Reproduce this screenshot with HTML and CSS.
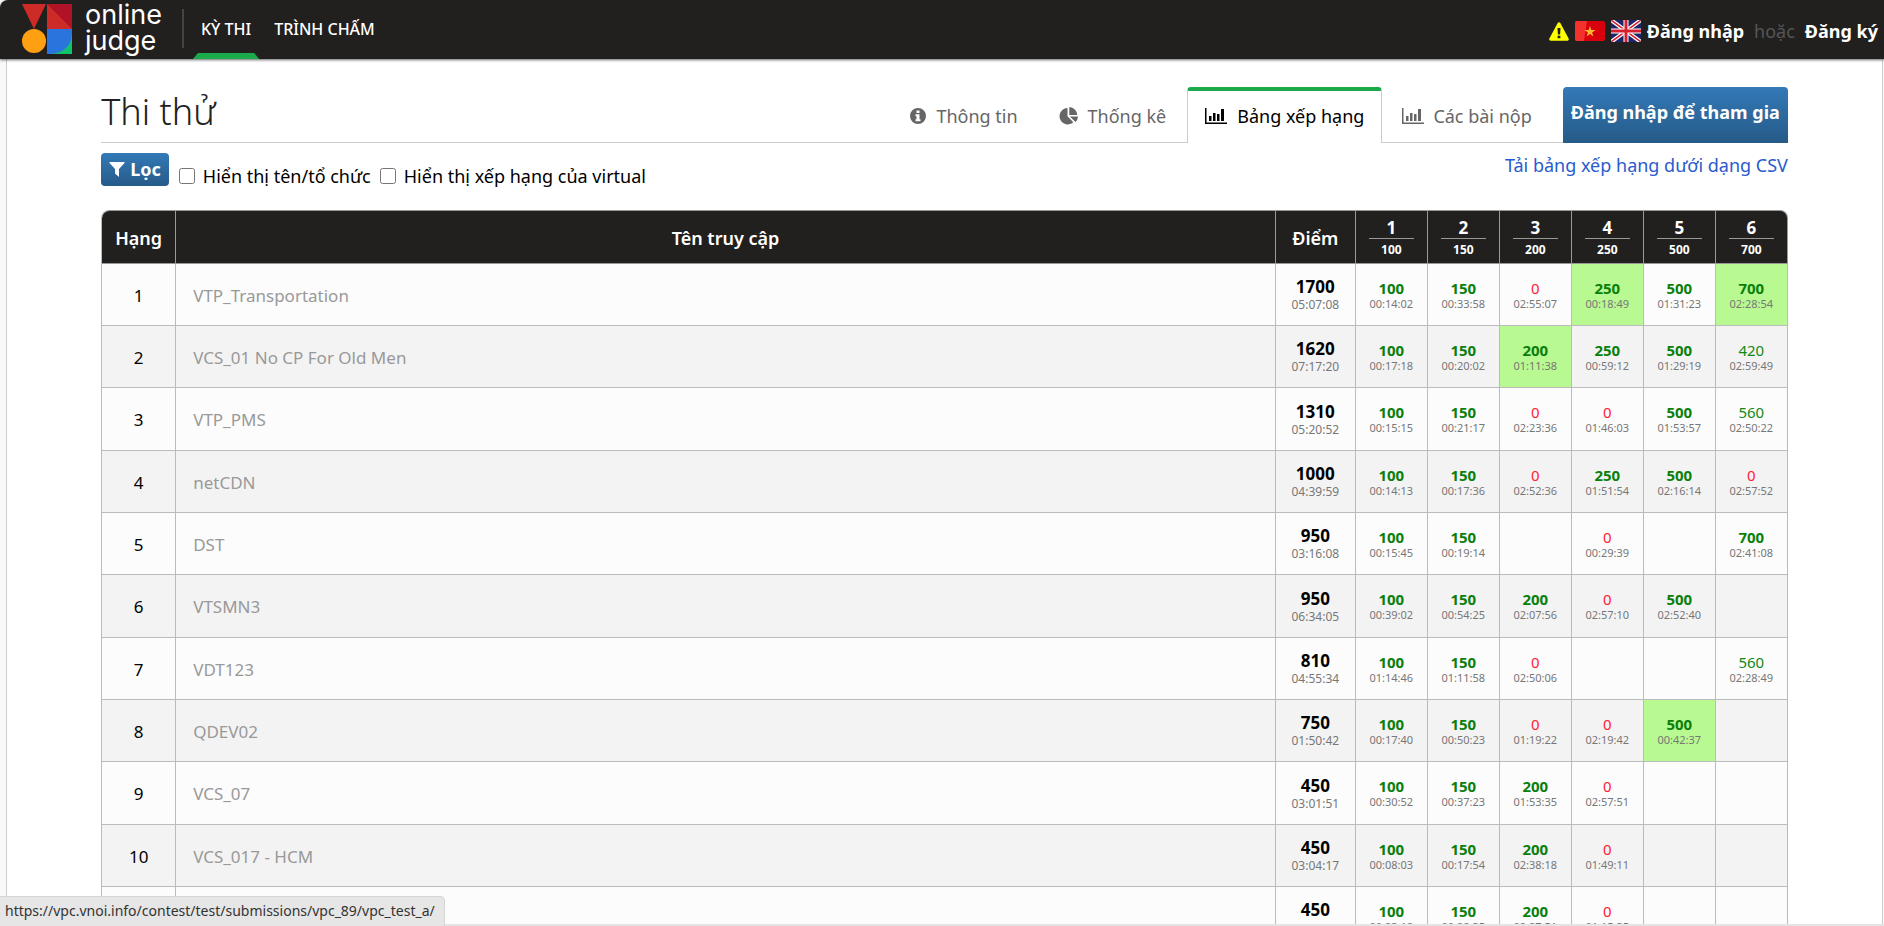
FILE: index.html
```html
<!DOCTYPE html>
<html lang="vi">
<head>
<meta charset="utf-8">
<title>Thi thử</title>
<link rel="stylesheet" href="styles.css">
</head>
<body>
<header class="nav">
  <a class="logo" href="#">
    <svg width="50" height="50" viewBox="0 0 50 50" aria-hidden="true">
      <path fill="#cd2b27" d="M0 0h24L12 25z"/><path fill="#cd2b27" d="M25 0h25v25H25z"/><path fill="#b01226" d="M25 0h25v25z"/>
      <circle cx="12" cy="37" r="12" fill="#ffa012"/><path fill="#2a74de" d="M25 25h25v25H25z"/><path fill="#11c26b" d="M50 29v21H29C42 49 50 41 50 29z"/>
    </svg>
    <span class="logo-text">online<br>judge</span>
  </a>
  <span class="nav-sep"></span>
  <nav class="nav-list">
    <a class="nav-item current" href="#">KỲ THI</a>
    <a class="nav-item" href="#">TRÌNH CHẤM</a>
  </nav>
  <div class="user">
    <svg width="20" height="19" viewBox="0 0 20 19" role="img" aria-label="Cảnh báo"><path fill="#ff0" d="M8.700 1a1.500 1.500 0 0 1 2.600 0l8.300 15.500a1.500 1.500 0 0 1-1.300 2.200H1.700a1.500 1.500 0 0 1-1.300-2.200z"/><path fill="#222" d="M8.500 6h3l-.4 6.500H8.900zM8.600 13.700h2.800v2.500H8.600z"/></svg>
    <svg class="flag" width="30" height="20" viewBox="0 0 30 20" role="img" aria-label="Tiếng Việt"><path fill="#d8000d" d="M0 0h30v20H0z"/><path fill="#f3322e" d="M0 0h12L9 20H0z"/><path fill="#fdb92a" d="M15 5l1.300 4h4.200l-3.400 2.400 1.300 4-3.400-2.500-3.400 2.500 1.300-4L9.500 9h4.200z"/></svg>
    <svg class="flag" width="30" height="22" viewBox="0 0 30 22" role="img" aria-label="English"><path fill="#1d2569" d="M0 0h30v22H0z"/><path stroke="#fff" stroke-width="4" d="M0 0l30 22M30 0L0 22"/><path stroke="#d6202f" stroke-width="1.500" d="M0 0l30 22M30 0L0 22"/><path stroke="#fff" stroke-width="5" d="M15 0v22M0 11h30"/><path stroke="#d6202f" stroke-width="3" d="M15 0v22M0 11h30"/></svg>
    <a class="auth" href="#">Đăng nhập</a><span class="or">hoặc</span><a class="auth" href="#">Đăng ký</a>
  </div>
</header>
<main class="page">
  <div class="heading">
    <h1>Thi thử</h1>
    <nav class="tabs">
      <a class="tab" href="#"><svg width="18" height="18" viewBox="0 0 18 18" aria-hidden="true"><path fill="currentColor" fill-rule="evenodd" d="M9 1a8 8 0 1 0 0 16A8 8 0 0 0 9 1zM7.500 3.500h3V6h-3zM6.500 7.300h4v5h1v1.900h-5v-1.900h1V9.200h-1z"/></svg>Thông tin</a>
      <a class="tab" href="#"><svg width="20" height="18" viewBox="0 0 20 18" aria-hidden="true"><path fill="currentColor" d="M8.500 1v8.300l5.800 5.900A8.200 8.200 0 1 1 8.500 1zM10.300 0a8.300 8.300 0 0 1 8 8h-8zM10.800 9.500h8.200a8 8 0 0 1-2.500 5.500z"/></svg>Thống kê</a>
      <a class="tab active" href="#"><svg width="22" height="18" viewBox="0 0 22 18" aria-hidden="true"><path fill="currentColor" d="M0 1h1.500v14.500H22V17H0zM4 9h2.500v5H4zM8 6h2.500v8H8zM12 7h2.500v7H12zM16 2h3v12h-3z"/></svg>Bảng xếp hạng</a>
      <a class="tab" href="#"><svg width="22" height="18" viewBox="0 0 22 18" aria-hidden="true"><path fill="currentColor" d="M0 1h1.500v14.500H22V17H0zM4 9h2.500v5H4zM8 6h2.500v8H8zM12 7h2.500v7H12zM16 2h3v12h-3z"/></svg>Các bài nộp</a>
      <a class="join" href="#">Đăng nhập để tham gia</a>
    </nav>
  </div>
  <div class="tools">
    <button class="filter" type="button"><svg width="16" height="16" viewBox="0 0 15 16" aria-hidden="true"><path fill="currentColor" d="M0 1h15v1L9.500 8v8L5.500 12.500V8L0 2z"/></svg>Lọc</button>
    <label class="check"><input type="checkbox">Hiển thị tên/tổ chức</label>
    <label class="check"><input type="checkbox">Hiển thị xếp hạng của virtual</label>
    <a class="csv" href="#">Tải bảng xếp hạng dưới dạng CSV</a>
  </div>
  <table class="ranking">
    <colgroup><col class="c-rank"><col><col class="c-total"><col class="c-prob" span="6"></colgroup>
    <thead>
      <tr><th>Hạng</th><th>Tên truy cập</th><th>Điểm</th>
      <th class="prob">1<small>100</small></th><th class="prob">2<small>150</small></th><th class="prob">3<small>200</small></th><th class="prob">4<small>250</small></th><th class="prob">5<small>500</small></th><th class="prob">6<small>700</small></th></tr>
    </thead>
    <tbody>
      <tr><td>1</td><td class="name">VTP_Transportation</td><td class="total">1700<small>05:07:08</small></td><td class="full">100<small>00:14:02</small></td><td class="full">150<small>00:33:58</small></td><td class="zero">0<small>02:55:07</small></td><td class="full first">250<small>00:18:49</small></td><td class="full">500<small>01:31:23</small></td><td class="full first">700<small>02:28:54</small></td></tr>
      <tr><td>2</td><td class="name">VCS_01 No CP For Old Men</td><td class="total">1620<small>07:17:20</small></td><td class="full">100<small>00:17:18</small></td><td class="full">150<small>00:20:02</small></td><td class="full first">200<small>01:11:38</small></td><td class="full">250<small>00:59:12</small></td><td class="full">500<small>01:29:19</small></td><td class="part">420<small>02:59:49</small></td></tr>
      <tr><td>3</td><td class="name">VTP_PMS</td><td class="total">1310<small>05:20:52</small></td><td class="full">100<small>00:15:15</small></td><td class="full">150<small>00:21:17</small></td><td class="zero">0<small>02:23:36</small></td><td class="zero">0<small>01:46:03</small></td><td class="full">500<small>01:53:57</small></td><td class="part">560<small>02:50:22</small></td></tr>
      <tr><td>4</td><td class="name">netCDN</td><td class="total">1000<small>04:39:59</small></td><td class="full">100<small>00:14:13</small></td><td class="full">150<small>00:17:36</small></td><td class="zero">0<small>02:52:36</small></td><td class="full">250<small>01:51:54</small></td><td class="full">500<small>02:16:14</small></td><td class="zero">0<small>02:57:52</small></td></tr>
      <tr><td>5</td><td class="name">DST</td><td class="total">950<small>03:16:08</small></td><td class="full">100<small>00:15:45</small></td><td class="full">150<small>00:19:14</small></td><td></td><td class="zero">0<small>00:29:39</small></td><td></td><td class="full">700<small>02:41:08</small></td></tr>
      <tr><td>6</td><td class="name">VTSMN3</td><td class="total">950<small>06:34:05</small></td><td class="full">100<small>00:39:02</small></td><td class="full">150<small>00:54:25</small></td><td class="full">200<small>02:07:56</small></td><td class="zero">0<small>02:57:10</small></td><td class="full">500<small>02:52:40</small></td><td></td></tr>
      <tr><td>7</td><td class="name">VDT123</td><td class="total">810<small>04:55:34</small></td><td class="full">100<small>01:14:46</small></td><td class="full">150<small>01:11:58</small></td><td class="zero">0<small>02:50:06</small></td><td></td><td></td><td class="part">560<small>02:28:49</small></td></tr>
      <tr><td>8</td><td class="name">QDEV02</td><td class="total">750<small>01:50:42</small></td><td class="full">100<small>00:17:40</small></td><td class="full">150<small>00:50:23</small></td><td class="zero">0<small>01:19:22</small></td><td class="zero">0<small>02:19:42</small></td><td class="full first">500<small>00:42:37</small></td><td></td></tr>
      <tr><td>9</td><td class="name">VCS_07</td><td class="total">450<small>03:01:51</small></td><td class="full">100<small>00:30:52</small></td><td class="full">150<small>00:37:23</small></td><td class="full">200<small>01:53:35</small></td><td class="zero">0<small>02:57:51</small></td><td></td><td></td></tr>
      <tr><td>10</td><td class="name">VCS_017 - HCM</td><td class="total">450<small>03:04:17</small></td><td class="full">100<small>00:08:03</small></td><td class="full">150<small>00:17:54</small></td><td class="full">200<small>02:38:18</small></td><td class="zero">0<small>01:49:11</small></td><td></td><td></td></tr>
      <tr><td></td><td class="name"></td><td class="total">450<small>&nbsp;</small></td><td class="full">100<small>00:23:18</small></td><td class="full">150<small>00:28:35</small></td><td class="full">200<small>02:27:51</small></td><td class="zero">0<small>01:15:35</small></td><td></td><td></td></tr>
    </tbody>
  </table>
</main>
<div class="status">https://vpc.vnoi.info/contest/test/submissions/vpc_89/vpc_test_a/</div>
</body>
</html>
```
FILE: styles.css
```css
* { box-sizing: border-box; }
html, body { height: 100%; }
html { background: #fff; }
body {
  margin: 0;
  overflow: hidden;
  display: flex;
  flex-direction: column;
  background: #f9f9f9;
  border-bottom: 2px solid #e4e4e4;
  font: 18px/24px "Noto Sans", sans-serif;
  color: #000;
}
a { text-decoration: none; color: inherit; }
svg { flex: none; }

.nav {
  flex: none;
  display: flex;
  height: 59px;
  padding: 0 6px 0 22px;
  background: #22201f;
  border-top-left-radius: 8px;
  box-shadow: 0 1px 3px #0009;
  z-index: 1;
}
.logo { display: flex; align-items: center; gap: 13px; padding-bottom: 2px; color: #fff; }
.logo-text { font: 27px/26px Inter, sans-serif; padding-bottom: 2px; }
.nav-sep { width: 2px; margin: 9px 9px 11px 20px; background: #444; }
.nav-list { display: flex; }
.nav-item {
  position: relative;
  display: flex;
  align-items: center;
  padding: 0 8px 2px;
  margin-right: 7px;
  font-size: 16px;
  font-weight: 500;
  color: #fff;
}
.current::after {
  content: "";
  position: absolute;
  inset: auto 0 0;
  height: 6px;
  background: #1aa94b;
  clip-path: polygon(5px 0, calc(100% - 5px) 0, 100% 100%, 0 100%);
}
.user { display: flex; align-items: center; gap: 6px; margin-left: auto; padding-top: 3px; }
.flag { border-radius: 2px; }
.auth { font-weight: 700; color: #fff; }
.or { margin: 0 4px; color: #555; }

.page {
  flex: 1;
  min-height: 0;
  overflow: hidden;
  margin: 0 1px 0 6px;
  padding: 28px 5% 0;
  background: #fff;
  border: 1px solid #ccc;
  border-width: 0 1px;
}
.heading { display: flex; justify-content: space-between; height: 56px; border-bottom: 1px solid #ccc; }
h1 { margin: 0; font-size: 36px; line-height: 50px; font-weight: 300; color: #222; }
.tabs { display: flex; height: 56px; }
.tab { display: flex; align-items: center; gap: 9px; padding: 2px 21px 0 20px; color: #666; }
.active { padding: 0 17px 2px; gap: 10px; color: #000; background: #fff; border: 1px solid #ccc; border-top: 4px solid #1aa94b; border-bottom: 0; border-radius: 4px 4px 0 0; }
.join {
  margin-left: 10px;
  padding: 13px 8px;
  border-radius: 4px 4px 0 0;
  background: linear-gradient(#337ab7, #265a88);
  color: #fff;
  font-weight: 700;
}
.tools { display: flex; height: 67px; padding-top: 10px; align-items: flex-start; }
.filter {
  display: flex;
  align-items: center;
  gap: 5px;
  height: 33px;
  margin-right: 10px;
  padding: 0 8px 2px;
  border: 0;
  border-radius: 4px;
  background: linear-gradient(#337ab7, #265a88);
  color: #fff;
  font: 700 18px/24px "Noto Sans", sans-serif;
}
.check { display: flex; align-items: center; gap: 8px; padding-top: 11px; margin-right: 9px; }
.check input { width: 16px; height: 16px; margin: 0; }
.csv { margin-left: auto; color: #2a5bcd; }

.ranking { width: 100%; table-layout: fixed; border-collapse: separate; border-spacing: 0; border-left: 1px solid #bbb; border-top-left-radius: 8px; }
.c-rank { width: 74px; }
.c-total { width: 80px; }
.c-prob { width: 72px; }
th, td { padding: 2px 0 0; text-align: center; border-right: 1px solid #bbb; border-bottom: 1px solid #bbb; }
th { height: 54px; padding-top: 1px; background: #22201f; color: #fff; border-top: 1px solid #888; border-color: #999; font-weight: 600; }
th:first-child { border-top-left-radius: 8px; }
th:last-child { border-top-right-radius: 8px; }
.prob { padding-top: 3px; font-size: 17px; line-height: 20px; font-weight: 700; }
small { display: block; font-weight: 400; }
.prob small { margin: 0 13px; border-top: 1px solid #999; font-size: 12px; line-height: 21px; font-weight: 700; }
tbody tr { height: 62px; background: #fcfcfc; }
tbody tr:nth-child(even) { background: #f3f3f3; }
tbody tr:nth-child(3n) { height: 63px; }
td { font-size: 17px; }
.name { padding-left: 17px; text-align: left; color: #999; }
.total { padding-top: 3px; font-weight: 700; line-height: 18px; }
.total small { font-size: 12px; line-height: 18px; color: #777; }
.full, .part, .zero { padding-top: 1px; font-size: 15px; line-height: 16px; }
.full small, .part small, .zero small { font-size: 11px; line-height: 15px; color: #777; }
.full { font-weight: 700; color: #0b7f0b; }
.part { color: #128a12; }
.zero { color: #f23; }
.first { background: #b8f992; }

.status {
  position: fixed;
  left: 0;
  bottom: 0;
  height: 30px;
  padding: 0 9px 0 5px;
  border: 1px solid #d4d4d4;
  border-width: 1px 1px 0 0;
  border-radius: 0 5px 0 0;
  background: #e6e6e6;
  color: #333;
  font-size: 14px;
  line-height: 28px;
}
```
